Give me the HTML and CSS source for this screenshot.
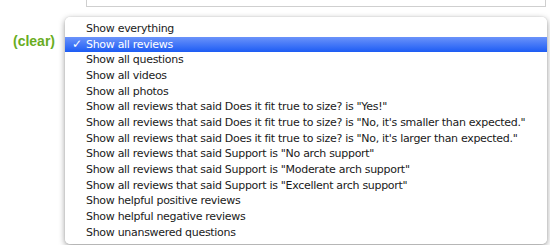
FILE: index.html
```html
<!DOCTYPE html>
<html lang="en">
<head>
  <meta charset="UTF-8">
  <title>Review filter</title>
  <link rel="stylesheet" href="styles.css">
</head>
<body>
  <div class="search-box"></div>

  <div class="filter-row">
    <a class="clear-link" href="#">(clear)</a>
    <ul class="filter-menu">
      <li>Show everything</li>
      <li class="selected"><span class="check">✓</span>Show all reviews</li>
      <li>Show all questions</li>
      <li>Show all videos</li>
      <li>Show all photos</li>
      <li>Show all reviews that said Does it fit true to size? is "Yes!"</li>
      <li>Show all reviews that said Does it fit true to size? is "No, it's smaller than expected."</li>
      <li>Show all reviews that said Does it fit true to size? is "No, it's larger than expected."</li>
      <li>Show all reviews that said Support is "No arch support"</li>
      <li>Show all reviews that said Support is "Moderate arch support"</li>
      <li>Show all reviews that said Support is "Excellent arch support"</li>
      <li>Show helpful positive reviews</li>
      <li>Show helpful negative reviews</li>
      <li>Show unanswered questions</li>
    </ul>
  </div>

  <div class="review">
    <h2 class="review-title">Comfortable shoe once</h2>
  </div>
</body>
</html>
```

FILE: styles.css
```css
* {
  box-sizing: border-box;
}

html, body {
  height: 245px;
}

body {
  margin: 0;
  background: #fff;
  font-family: 'DejaVu Sans', sans-serif;
}

.search-box {
  margin: -6px 0 0 86px;
  width: 460px;
  height: 13px;
  border: 1px solid #cfcfcf;
  background: #fff;
}

.filter-row {
  position: relative;
  height: 24px;
  margin-top: 22px;
  padding-left: 13px;
}

.clear-link {
  font-family: 'Liberation Sans', Arial, sans-serif;
  font-weight: bold;
  font-size: 14px;
  line-height: 24px;
  color: #69ad1f;
  text-decoration: none;
}

.filter-menu {
  position: absolute;
  left: 65px;
  top: -12px;
  width: 482px;
  margin: 0;
  padding: 4px 0;
  list-style: none;
  background: rgba(255, 255, 255, 0.97);
  border-radius: 5px;
  box-shadow: 0 2px 6px rgba(0, 0, 0, 0.4), 0 0 1px rgba(0, 0, 0, 0.25);
  z-index: 2;
}

.filter-menu li {
  height: 15.67px;
  line-height: 15.67px;
  padding-left: 21px;
  font-size: 11px;
  letter-spacing: -0.3px;
  color: #1a1a1a;
  white-space: nowrap;
  position: relative;
}

.filter-menu li.selected {
  background: linear-gradient(#6b93fa, #1d5cf4);
  color: #fff;
}

.check {
  position: absolute;
  left: 7px;
  font-size: 12px;
  font-weight: bold;
}

.review {
  margin-top: 152px;
  padding-left: 266px;
}

.review-title {
  margin: 0;
  font-family: 'Liberation Sans', Arial, sans-serif;
  font-size: 20px;
  font-weight: bold;
  color: #f2f2f2;
}
```
